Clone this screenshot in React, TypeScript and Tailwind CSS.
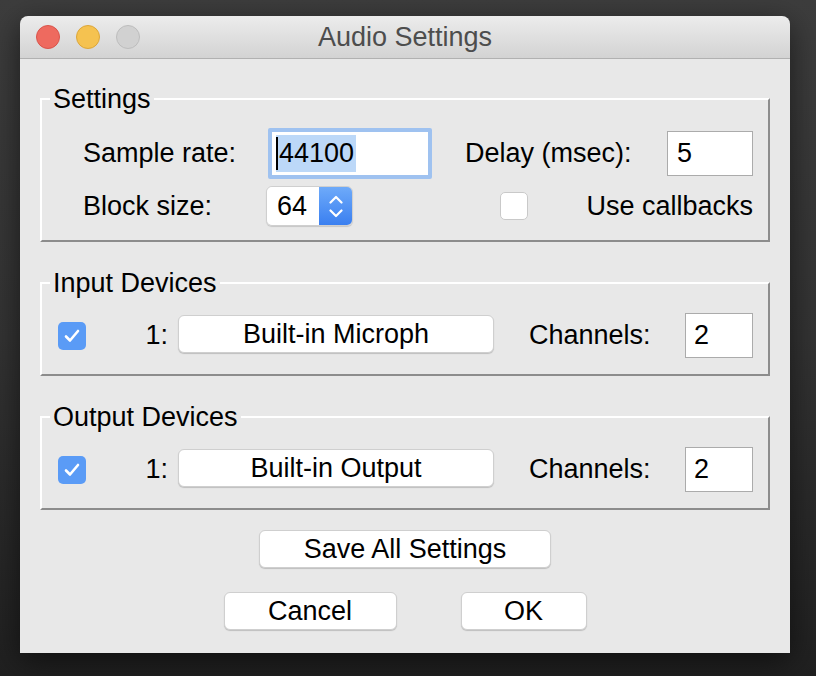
import React from "react";

function Group({ title, children, className }: { title: string; children: React.ReactNode; className?: string }) {
  return (
    <div className={"relative border-2 border-t-white border-l-white border-r-[#8c8c8c] border-b-[#8c8c8c] " + (className ?? "")}>
      <div className="absolute left-[8px] top-[-16px] bg-[#e8e8e8] px-[3px] text-[27px] leading-[30px] text-black">{title}</div>
      {children}
    </div>
  );
}

function MacButton({ label, className }: { label: string; className?: string }) {
  return (
    <div
      className={
        "flex items-center justify-center rounded-[6px] border border-[#cfcfcf] bg-white text-[27px] leading-none text-black shadow-[0_1px_1px_rgba(0,0,0,0.18)] " +
        (className ?? "")
      }
    >
      {label}
    </div>
  );
}

function Checked() {
  return (
    <div className="flex h-[28px] w-[28px] items-center justify-center rounded-[5px] bg-[#5a9bf6]">
      <svg width="18" height="16" viewBox="0 0 18 16" fill="none">
        <path d="M3 8.5 L7 12.5 L15 3" stroke="white" strokeWidth="2.6" strokeLinecap="round" strokeLinejoin="round" />
      </svg>
    </div>
  );
}

function DeviceRow({ device }: { device: string }) {
  return (
    <div className="flex h-[45px] items-center pl-[16px]">
      <Checked />
      <div className="w-[92px] pr-[10px] text-right text-[27px] leading-none text-black">1:</div>
      <div className="mb-[3px]">
        <MacButton label={device} className="h-[38px] w-[316px]" />
      </div>
      <div className="ml-[35px] w-[156px] text-[27px] leading-none text-black">Channels:</div>
      <div className="flex h-[45px] w-[68px] items-center border border-[#ababab] bg-white pl-[8px] text-[27px] leading-none text-black">2</div>
    </div>
  );
}

export default function App() {
  return (
    <div className="h-[676px] w-[816px] overflow-hidden bg-linear-to-b from-[#3d3d3d] via-[#333333] to-[#202020] pl-[20px] pt-[16px] font-['Liberation_Sans',Arial,sans-serif]">
      <div className="w-[770px] overflow-hidden rounded-t-[8px] shadow-[0_8px_30px_rgba(0,0,0,0.55)]">
        {/* Title bar */}
        <div className="relative flex h-[43px] items-center border-b border-[#b1b1b1] bg-linear-to-b from-[#ececec] to-[#d3d3d3]">
          <div className="flex items-center gap-[16px] pl-[16px]">
            <div className="h-[24px] w-[24px] rounded-full border border-[#d9544b] bg-[#ee6a5f]" />
            <div className="h-[24px] w-[24px] rounded-full border border-[#dca63a] bg-[#f5c250]" />
            <div className="h-[24px] w-[24px] rounded-full border border-[#bdbdbd] bg-[#d1d1d1]" />
          </div>
          <div className="absolute inset-0 flex items-center justify-center text-[27px] leading-none text-[#4d4d4d]">
            Audio Settings
          </div>
        </div>

        {/* Content */}
        <div className="h-[594px] bg-[#e8e8e8] px-[20px] pt-[39px]">
          <Group title="Settings" className="h-[144px]">
            <div className="mt-[28px] flex h-[51px] items-center pl-[41px]">
              <div className="w-[185px] text-[27px] leading-none text-black">Sample rate:</div>
              <div className="h-[51px] w-[164px] rounded-[2px] bg-[#9fc2f0] p-[4px]">
                <div className="flex h-full w-full items-center bg-white pl-[4px]">
                  <div className="relative flex h-[37px] items-center bg-[#bcd8f8] pl-[3px] pr-[2px] text-[27px] leading-none text-black">
                    <div className="absolute left-0 top-[2px] h-[33px] w-[1.5px] bg-black" />
                    44100
                  </div>
                </div>
              </div>
              <div className="ml-[33px] w-[202px] text-[27px] leading-none text-black">Delay (msec):</div>
              <div className="flex h-[45px] w-[86px] items-center border border-[#ababab] bg-white pl-[9px] text-[27px] leading-none text-black">5</div>
            </div>
            <div className="mt-[7px] flex h-[40px] items-center pl-[41px]">
              <div className="w-[183px] text-[27px] leading-none text-black">Block size:</div>
              <div className="flex h-[40px] w-[87px] overflow-hidden rounded-[6px] border border-[#cfcfcf] shadow-[0_1px_1px_rgba(0,0,0,0.15)]">
                <div className="flex flex-1 items-center bg-white pl-[10px] text-[27px] leading-none text-black">64</div>
                <div className="flex w-[33px] flex-col items-center justify-center gap-[5px] bg-linear-to-b from-[#6eaaf9] to-[#3a7ff0]">
                  <svg width="14" height="9" viewBox="0 0 14 9" fill="none">
                    <path d="M1.5 7.5 L7 2 L12.5 7.5" stroke="white" strokeWidth="2.2" strokeLinecap="round" strokeLinejoin="round" />
                  </svg>
                  <svg width="14" height="9" viewBox="0 0 14 9" fill="none">
                    <path d="M1.5 1.5 L7 7 L12.5 1.5" stroke="white" strokeWidth="2.2" strokeLinecap="round" strokeLinejoin="round" />
                  </svg>
                </div>
              </div>
              <div className="ml-[147px] h-[28px] w-[28px] rounded-[5px] border border-[#c9c9c9] bg-white" />
              <div className="ml-auto pr-[15px] text-[27px] leading-none text-black">Use callbacks</div>
            </div>
          </Group>

          <Group title="Input Devices" className="mt-[40px] h-[94px]">
            <div className="pt-[29px]">
              <DeviceRow device="Built-in Microph" />
            </div>
          </Group>

          <Group title="Output Devices" className="mt-[40px] h-[94px]">
            <div className="pt-[29px]">
              <DeviceRow device="Built-in Output" />
            </div>
          </Group>

          <div className="mt-[20px] flex justify-center">
            <MacButton label="Save All Settings" className="h-[38px] w-[292px]" />
          </div>
          <div className="mt-[24px] flex justify-center gap-[64px]">
            <MacButton label="Cancel" className="h-[38px] w-[173px]" />
            <MacButton label="OK" className="h-[38px] w-[126px]" />
          </div>
        </div>
      </div>
    </div>
  );
}
